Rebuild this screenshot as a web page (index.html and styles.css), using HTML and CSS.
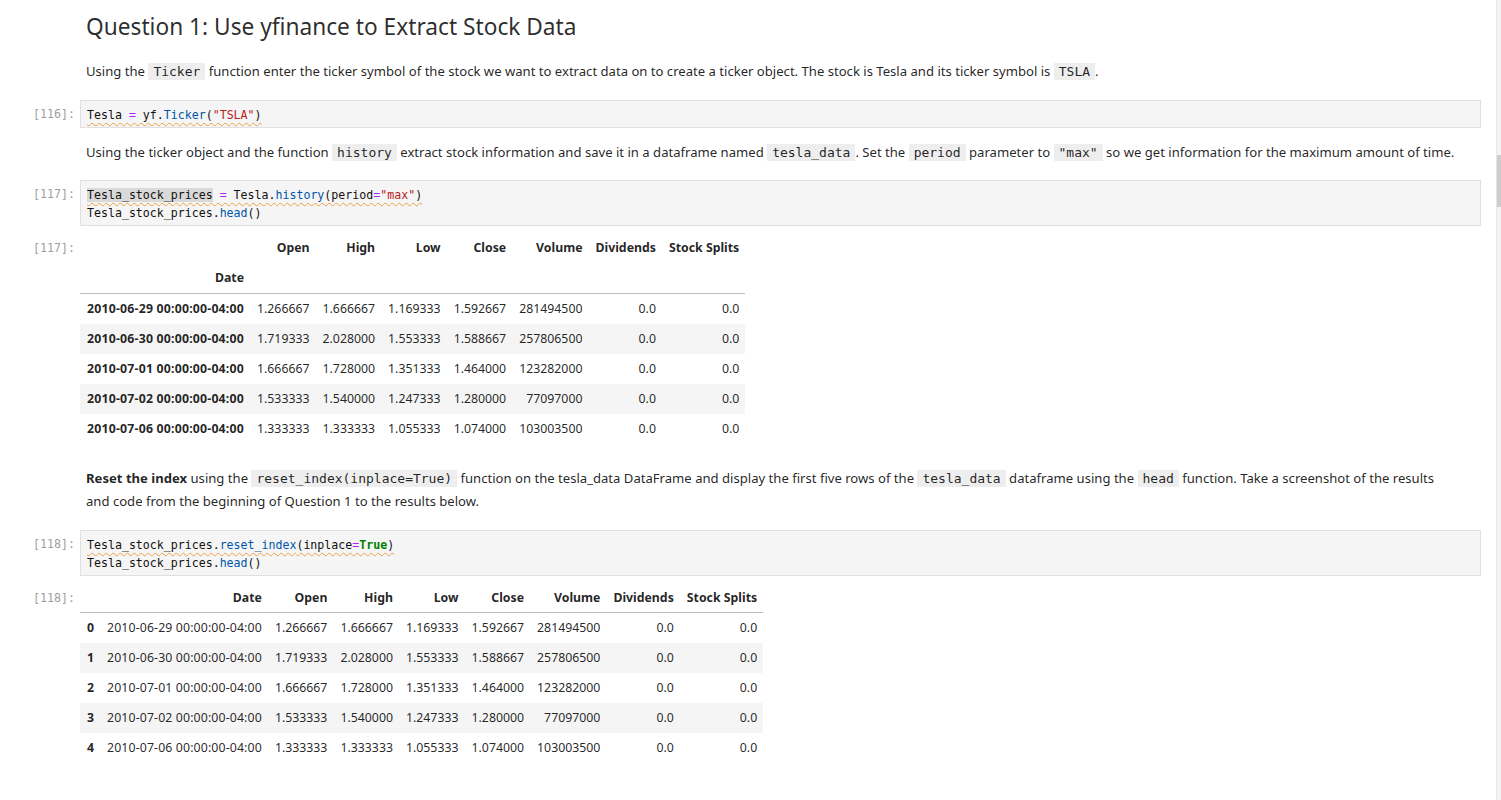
FILE: index.html
```html
<!DOCTYPE html>
<html>
<head>
<meta charset="utf-8">
<link rel="stylesheet" href="styles.css">
</head>
<body>
<div class="notebook">
  <div class="cell md heading-cell">
    <div class="prompt"></div>
    <div class="content"><h2 class="title">Question 1: Use yfinance to Extract Stock Data</h2></div>
  </div>
  <div class="cell md p1">
    <div class="prompt"></div>
    <div class="content"><p>Using the <code>Ticker</code> function enter the ticker symbol of the stock we want to extract data on to create a ticker object. The stock is Tesla and its ticker symbol is <code>TSLA</code>.</p></div>
  </div>
  <div class="cell code c1">
    <div class="prompt">[116]:</div>
    <div class="content"><pre class="codebox"><span class="wavy">Tesla <span class="o">=</span> yf.<span class="f">Ticker</span>(<span class="s">"TSLA"</span>)</span></pre></div>
  </div>
  <div class="cell md p2">
    <div class="prompt"></div>
    <div class="content"><p>Using the ticker object and the function <code>history</code> extract stock information and save it in a dataframe named <code>tesla_data</code>. Set the <code>period</code> parameter to <code>"max"</code> so we get information for the maximum amount of time.</p></div>
  </div>
  <div class="cell code c2">
    <div class="prompt">[117]:</div>
    <div class="content"><pre class="codebox"><span class="wavy"><span class="sel">Tesla_stock_prices</span> <span class="o">=</span> Tesla.<span class="f">history</span>(period<span class="o">=</span><span class="s">"max"</span>)</span>
Tesla_stock_prices.<span class="f">head</span>()</pre></div>
  </div>
  <div class="cell out o1">
    <div class="prompt">[117]:</div>
    <div class="content">
      <table class="df df1">
        <thead>
          <tr><th></th><th>Open</th><th>High</th><th>Low</th><th>Close</th><th>Volume</th><th>Dividends</th><th>Stock Splits</th></tr>
          <tr class="hdr2"><th>Date</th><th></th><th></th><th></th><th></th><th></th><th></th><th></th></tr>
        </thead>
        <tbody>
          <tr><th class="dt">2010-06-29 00:00:00-04:00</th><td>1.266667</td><td>1.666667</td><td>1.169333</td><td>1.592667</td><td>281494500</td><td>0.0</td><td>0.0</td></tr>
          <tr><th class="dt">2010-06-30 00:00:00-04:00</th><td>1.719333</td><td>2.028000</td><td>1.553333</td><td>1.588667</td><td>257806500</td><td>0.0</td><td>0.0</td></tr>
          <tr><th class="dt">2010-07-01 00:00:00-04:00</th><td>1.666667</td><td>1.728000</td><td>1.351333</td><td>1.464000</td><td>123282000</td><td>0.0</td><td>0.0</td></tr>
          <tr><th class="dt">2010-07-02 00:00:00-04:00</th><td>1.533333</td><td>1.540000</td><td>1.247333</td><td>1.280000</td><td>77097000</td><td>0.0</td><td>0.0</td></tr>
          <tr><th class="dt">2010-07-06 00:00:00-04:00</th><td>1.333333</td><td>1.333333</td><td>1.055333</td><td>1.074000</td><td>103003500</td><td>0.0</td><td>0.0</td></tr>
        </tbody>
      </table>
    </div>
  </div>
  <div class="cell md p3">
    <div class="prompt"></div>
    <div class="content"><p><strong>Reset the index</strong> using the <code>reset_index(inplace=True)</code> function on the tesla_data DataFrame and display the first five rows of the <code>tesla_data</code> dataframe using the <code>head</code> function. Take a screenshot of the results<br>and code from the beginning of Question 1 to the results below.</p></div>
  </div>
  <div class="cell code c3">
    <div class="prompt">[118]:</div>
    <div class="content"><pre class="codebox"><span class="wavy">Tesla_stock_prices.<span class="f">reset_index</span>(inplace<span class="o">=</span><span class="k">True</span>)</span>
Tesla_stock_prices.<span class="f">head</span>()</pre></div>
  </div>
  <div class="cell out o2">
    <div class="prompt">[118]:</div>
    <div class="content">
      <table class="df df2">
        <thead>
          <tr><th></th><th>Date</th><th>Open</th><th>High</th><th>Low</th><th>Close</th><th>Volume</th><th>Dividends</th><th>Stock Splits</th></tr>
        </thead>
        <tbody>
          <tr><th>0</th><td class="dt">2010-06-29 00:00:00-04:00</td><td>1.266667</td><td>1.666667</td><td>1.169333</td><td>1.592667</td><td>281494500</td><td>0.0</td><td>0.0</td></tr>
          <tr><th>1</th><td class="dt">2010-06-30 00:00:00-04:00</td><td>1.719333</td><td>2.028000</td><td>1.553333</td><td>1.588667</td><td>257806500</td><td>0.0</td><td>0.0</td></tr>
          <tr><th>2</th><td class="dt">2010-07-01 00:00:00-04:00</td><td>1.666667</td><td>1.728000</td><td>1.351333</td><td>1.464000</td><td>123282000</td><td>0.0</td><td>0.0</td></tr>
          <tr><th>3</th><td class="dt">2010-07-02 00:00:00-04:00</td><td>1.533333</td><td>1.540000</td><td>1.247333</td><td>1.280000</td><td>77097000</td><td>0.0</td><td>0.0</td></tr>
          <tr><th>4</th><td class="dt">2010-07-06 00:00:00-04:00</td><td>1.333333</td><td>1.333333</td><td>1.055333</td><td>1.074000</td><td>103003500</td><td>0.0</td><td>0.0</td></tr>
        </tbody>
      </table>
    </div>
  </div>
</div>
<div class="scrollbar"><div class="thumb"></div></div>
</body>
</html>
```
FILE: styles.css
```css
html, body {
  margin: 0;
  padding: 0;
  background: #ffffff;
}
body {
  font-family: "Noto Sans", "Open Sans", sans-serif;
  font-size: 13.1px;
  color: rgba(0, 0, 0, 0.87);
  position: relative;
  height: 800px;
  overflow: hidden;
}
.notebook {
  padding: 0 20px 0 0;
}
.cell {
  display: flex;
}
.prompt {
  width: 80px;
  flex: none;
  box-sizing: border-box;
  padding-right: 5px;
  text-align: right;
  font-family: "DejaVu Sans Mono", monospace;
  font-size: 11.6px;
  line-height: 18px;
  color: #9e9e9e;
}
.content {
  flex: 1;
  min-width: 0;
}
.md .content {
  padding-left: 6px;
}
.title {
  margin: 0;
  font-weight: 400;
  font-size: 22.7px;
  line-height: 32px;
  padding-top: 11px;
  color: rgba(0, 0, 0, 0.84);
}
p {
  margin: 0;
  line-height: 22px;
}
.p1 { margin-top: 17px; }
.p2 { margin-top: 13px; }
.p3 { margin-top: 23px; }
.c1 { margin-top: 17px; }
.c2 { margin-top: 16px; }
.c3 { margin-top: 18px; }
.o1 { margin-top: 7px; }
.o2 { margin-top: 7px; }
.o1 .prompt { padding-top: 6px; }
.o2 .prompt { padding-top: 6px; }

code {
  font-family: "DejaVu Sans Mono", monospace;
  font-size: 13px;
  background: #eeeeee;
  padding: 1px 5px;
  color: rgba(0, 0, 0, 0.87);
}
.codebox {
  margin: 0;
  background: #f5f5f5;
  border: 1px solid #e0e0e0;
  padding: 5px 6px 3px;
  font-family: "DejaVu Sans Mono", monospace;
  font-size: 11.6px;
  line-height: 18px;
  color: #111;
}
.code .prompt {
  padding-top: 5px;
}
.wavy {
  text-decoration: underline wavy #ef9f4a;
  text-decoration-thickness: 1px;
  text-underline-offset: 3px;
}
.o { color: #aa22ff; }
.f { color: #0055aa; }
.s { color: #ba2121; }
.k { color: #008000; font-weight: bold; }
.sel { background: #d9d9d9; }

.df {
  border-collapse: collapse;
  font-size: 12.3px;
  color: rgba(0, 0, 0, 0.87);
}
.df th, .df td {
  height: 30px;
  padding: 0 6px 0 7px;
  text-align: right;
  white-space: nowrap;
  vertical-align: middle;
  line-height: 16px;
}
.df th {
  font-weight: bold;
}
.df th.dt {
  letter-spacing: 0.2px;
}
.df td.dt {
  letter-spacing: 0.13px;
}
.df thead tr:last-child th {
  border-bottom: 1px solid #bdbdbd;
}
.df tbody tr:nth-child(even) {
  background: #f5f5f5;
}
.df2 thead th {
  height: 29px;
}
.df2 tbody th {
  text-align: left;
}

.scrollbar {
  position: absolute;
  top: 0;
  right: 0;
  width: 4px;
  height: 800px;
  background: #f4f4f4;
  border-left: 1px solid #e6e6e6;
}
.thumb {
  position: absolute;
  top: 155px;
  left: 0;
  width: 4px;
  height: 52px;
  background: #cdcdcd;
}
```
